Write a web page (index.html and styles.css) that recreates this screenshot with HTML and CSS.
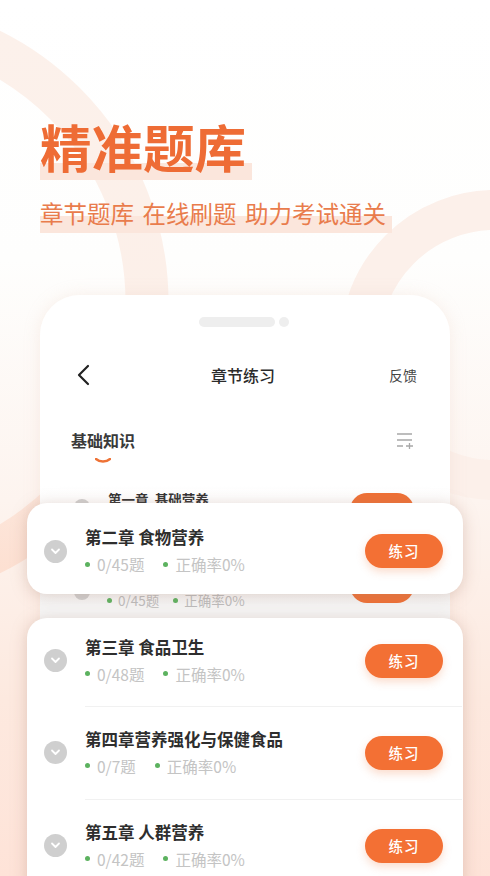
FILE: index.html
```html
<!DOCTYPE html>
<html lang="zh">
<head>
<meta charset="utf-8">
<title>精准题库</title>
<link rel="stylesheet" href="styles.css">
</head>
<body>
<div class="page">
  <svg class="arcs" width="490" height="876" viewBox="0 0 490 876" aria-hidden="true">
    <defs>
      <linearGradient id="arcLeft" x1="0" y1="30" x2="0" y2="620" gradientUnits="userSpaceOnUse">
        <stop offset="0" stop-color="#fcf1eb"/>
        <stop offset="0.6" stop-color="#fcefe8"/>
        <stop offset="1" stop-color="#fddccc"/>
      </linearGradient>
    </defs>
    <circle cx="-134" cy="302" r="281" fill="none" stroke="url(#arcLeft)" stroke-width="43"/>
    <circle cx="495" cy="345" r="135" fill="none" stroke="#fcf0ea" stroke-width="40"/>
  </svg>

  <header class="hero">
    <h1 class="hero-title"><span>精准题库</span></h1>
    <p class="hero-sub"><span>章节题库<i class="gap"></i>在线刷题<i class="gap"></i>助力考试通关</span></p>
  </header>

  <section class="phone">
    <div class="notch"><b class="pill"></b><b class="dot"></b></div>
    <nav class="nav">
      <svg class="back" width="14" height="22" viewBox="0 0 14 22" aria-hidden="true"><path d="M12 2 3 11l9 9" fill="none" stroke="#222" stroke-width="2.2" stroke-linecap="round" stroke-linejoin="round"/></svg>
      <span class="nav-title">章节练习</span>
      <span class="nav-side">反馈</span>
    </nav>
    <div class="section-head">
      <div class="tab">基础知识
        <svg class="smile" width="16" height="5" viewBox="0 0 16 5" aria-hidden="true"><path d="M1 1c4 3.4 10 3.4 14 0" fill="none" stroke="#ee7236" stroke-width="2.4" stroke-linecap="round"/></svg>
      </div>
      <svg class="sort" width="18" height="18" viewBox="0 0 18 18" aria-hidden="true"><path d="M1 2h15M1 8h15M1 14h6M10 14h7M13.500 11v6" fill="none" stroke="#a8a8a8" stroke-width="1.300"/></svg>
    </div>
    <div class="under-row">
      <i class="under-circle"></i>
      <span class="under-title">第一章&nbsp;&nbsp;基础营养</span>
      <i class="under-btn"></i>
    </div>
    <div class="under-row under-second">
      <i class="under-circle"></i>
      <div class="under-stats">
        <span class="stat">0/45题</span>
        <span class="stat">正确率0%</span>
      </div>
      <i class="under-btn"></i>
    </div>
  </section>

  <article class="card card-float">
    <div class="row">
      <span class="chev"><svg width="11" height="7" viewBox="0 0 11 7" aria-hidden="true"><path d="M2 1.500 5.500 5 9 1.500" fill="none" stroke="#fff" stroke-width="1.800" stroke-linecap="round" stroke-linejoin="round"/></svg></span>
      <div class="info"><h2>第二章 食物营养</h2><div class="stats"><span class="stat">0/45题</span><span class="stat">正确率0%</span></div></div>
      <span class="btn">练习</span>
    </div>
  </article>

  <article class="card card-list">
    <div class="row row-first">
      <span class="chev"><svg width="11" height="7" viewBox="0 0 11 7" aria-hidden="true"><path d="M2 1.500 5.500 5 9 1.500" fill="none" stroke="#fff" stroke-width="1.800" stroke-linecap="round" stroke-linejoin="round"/></svg></span>
      <div class="info"><h2>第三章 食品卫生</h2><div class="stats"><span class="stat">0/48题</span><span class="stat">正确率0%</span></div></div>
      <span class="btn">练习</span>
    </div>
    <div class="row">
      <span class="chev"><svg width="11" height="7" viewBox="0 0 11 7" aria-hidden="true"><path d="M2 1.500 5.500 5 9 1.500" fill="none" stroke="#fff" stroke-width="1.800" stroke-linecap="round" stroke-linejoin="round"/></svg></span>
      <div class="info"><h2>第四章营养强化与保健食品</h2><div class="stats"><span class="stat">0/7题</span><span class="stat">正确率0%</span></div></div>
      <span class="btn">练习</span>
    </div>
    <div class="row">
      <span class="chev"><svg width="11" height="7" viewBox="0 0 11 7" aria-hidden="true"><path d="M2 1.500 5.500 5 9 1.500" fill="none" stroke="#fff" stroke-width="1.800" stroke-linecap="round" stroke-linejoin="round"/></svg></span>
      <div class="info"><h2>第五章 人群营养</h2><div class="stats"><span class="stat">0/42题</span><span class="stat">正确率0%</span></div></div>
      <span class="btn">练习</span>
    </div>
  </article>
</div>
</body>
</html>
```

FILE: styles.css
```css
* { box-sizing: border-box; }
html, body { margin: 0; padding: 0; height: 100%; overflow: hidden; }
body { font-family: "Noto Sans CJK SC", "Noto Sans", sans-serif; color: #2b2b2b; }

.page {
  position: relative;
  width: 490px;
  height: 876px;
  overflow: hidden;
  background: linear-gradient(180deg, #ffffff 0, #fefefd 260px, #fdf4ef 500px, #fde9df 700px, #fee3d8 876px);
}
.arcs { position: absolute; left: 0; top: 0; }

.hero { position: relative; padding: 115px 0 0 40px; height: 295px; }
.hero-title {
  margin: 0;
  font-size: 51.500px;
  line-height: 62px;
  font-weight: 700;
  color: #ee6c35;
}
.hero-title span {
  display: block;
  width: 212px;
  height: 65px;
  background: linear-gradient(180deg, transparent 48px, #fbe6dc 48px, #fbe6dc 65px);
}
.hero-sub {
  margin: 19px 0 0;
  font-size: 23.500px;
  line-height: 28px;
  color: #e97c4c;
}
.hero-sub span {
  display: inline-block;
  padding-right: 6px;
  height: 34px;
  background: linear-gradient(180deg, transparent 17px, #fbe6dc 17px, #fbe6dc 34px);
}
.gap { display: inline-block; width: 8.500px; }

.phone {
  position: relative;
  width: 410px;
  height: 600px;
  margin-left: 40px;
  border-radius: 40px 40px 0 0;
  background: linear-gradient(180deg, #ffffff 0, #ffffff 190px, #f6f6f6 310px);
  box-shadow: 0 0 16px rgba(230, 200, 185, 0.25);
}
.notch { display: flex; justify-content: center; align-items: center; gap: 4px; padding-top: 22px; height: 32px; padding-right: 2px; }
.pill { width: 76px; height: 10px; border-radius: 5px; background: #eeeeee; }
.dot { width: 10px; height: 10px; border-radius: 5px; background: #eeeeee; }

.nav { display: flex; align-items: center; justify-content: space-between; height: 38px; margin-top: 29px; padding: 0 33px 0 36px; position: relative; }
.nav-title { position: absolute; left: 0; right: 4px; text-align: center; font-size: 16px; font-weight: 500; color: #2b2b2b; }
.nav-side { font-size: 14px; color: #444; }
.back { display: block; }

.section-head { display: flex; justify-content: space-between; align-items: flex-start; margin-top: 34px; padding: 0 35px 0 31px; }
.tab { position: relative; font-size: 16px; font-weight: 700; line-height: 24px; color: #3a3a3a; }
.smile { position: absolute; left: 24px; top: 30px; }
.sort { margin-top: 4px; margin-right: 1px; }

.under-row { position: absolute; left: 34px; right: 36px; top: 196px; height: 40px; display: flex; align-items: flex-start; }
.under-title { position: absolute; left: 34px; top: -1px; font-size: 13.500px; font-weight: 700; color: #333; line-height: 18px; }
.under-circle { position: absolute; left: 0; top: 8px; width: 16px; height: 16px; border-radius: 50%; background: #d0d0d0; }
.under-btn { position: absolute; right: 0; top: 2px; width: 64px; height: 34px; border-radius: 17px; background: #ef7035; }
.under-second { top: 285px; }
.under-second .under-circle { top: 4px; }
.under-second .under-btn { top: -11px; }
.under-stats { position: absolute; left: 33px; top: 10px; display: flex; gap: 14px; font-size: 13.500px; white-space: nowrap; }
.under-stats .stat { color: #bdbdbd; line-height: 20px; gap: 6px; }

.card { position: absolute; left: 27px; width: 436px; background: #fff; border-radius: 20px; box-shadow: 0 2px 16px rgba(170, 130, 110, 0.34); }
.card-float { top: 503px; height: 91px; }
.card-list { top: 618px; height: 280px; }

.row { display: flex; align-items: center; height: 93px; padding: 0 20px 0 17px; position: relative; }
.card-float .row { height: 96px; }
.row-first { height: 88px; padding-bottom: 3px; }
.row + .row::before { content: ""; position: absolute; left: 58px; right: 1px; top: 0; height: 1px; background: #f1f1f1; }

.chev { flex: none; display: flex; align-items: center; justify-content: center; width: 23px; height: 23px; border-radius: 50%; background: #cfcfcf; }
.info { flex: 1; min-width: 0; margin-left: 18px; }
.info h2 { margin: -2px 0 0; font-size: 16.500px; line-height: 24px; font-weight: 700; color: #2e2e2e; white-space: nowrap; }
.stats { display: flex; gap: 19px; margin-top: 4px; white-space: nowrap; font-size: 15.500px; line-height: 22px; color: #c4c4c4; }
.stat { display: inline-flex; align-items: center; gap: 7px; }
.stat::before { content: ""; width: 5px; height: 5px; border-radius: 50%; background: #5cb25f; }

.btn {
  flex: none;
  width: 78px;
  height: 34px;
  border-radius: 17px;
  background: #f37034;
  color: #fff;
  font-size: 14.500px;
  font-weight: 500;
  line-height: 34px;
  letter-spacing: 1px;
  text-align: center;
  box-shadow: 0 4px 8px rgba(240, 120, 60, 0.25);
}
```
